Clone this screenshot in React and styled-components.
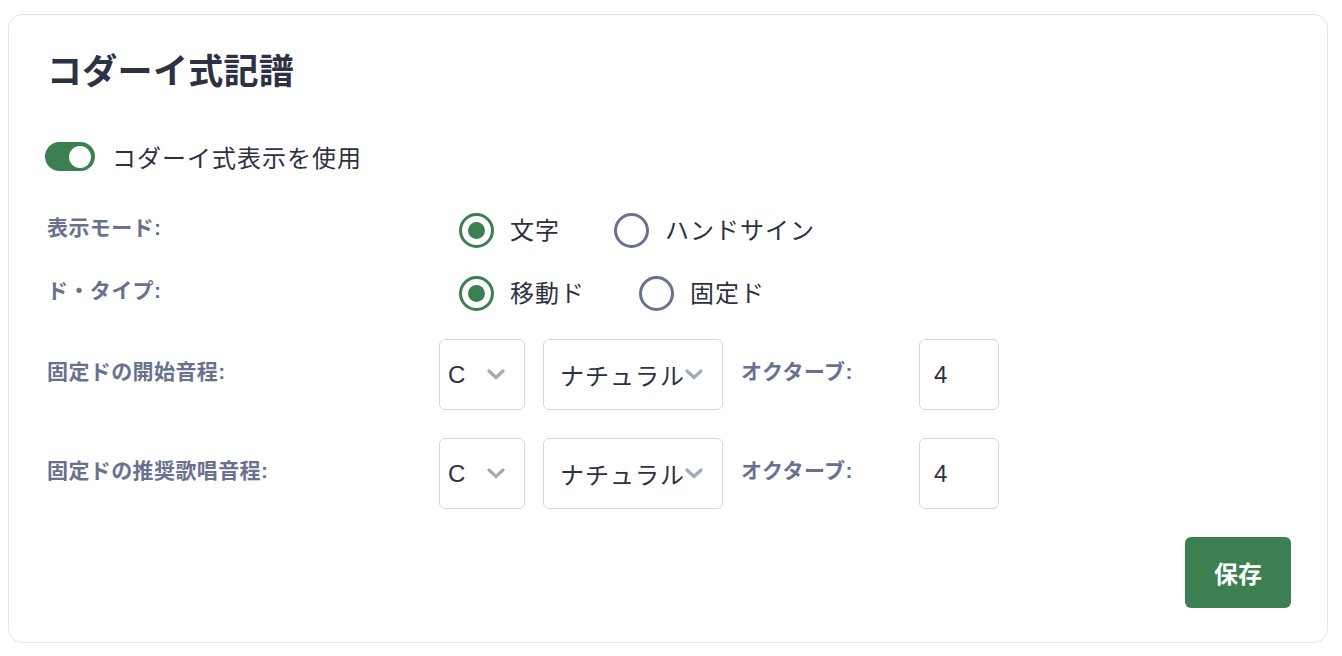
import React, { useState } from "react";
import styled, { createGlobalStyle } from "styled-components";

const Global = createGlobalStyle`
  html, body { margin: 0; padding: 0; background: #ffffff; }
  body {
    font-family: "Liberation Sans", "Noto Sans CJK JP", sans-serif;
    color: #2d3142;
  }
  * { box-sizing: border-box; }
`;

const Page = styled.div`
  padding: 14px 14px 12px 8px;
`;

const Card = styled.section`
  border: 1px solid #e3e4e8;
  border-radius: 14px;
  padding: 36px 36px 34px 38px;
  display: flex;
  flex-direction: column;
`;

const Title = styled.h2`
  margin: 0;
  font-size: 35px;
  line-height: 42px;
  font-weight: 700;
  color: #2d3142;
  letter-spacing: 0.3px;
`;

const ToggleRow = styled.label`
  margin-top: 49px;
  margin-left: -2px;
  display: flex;
  align-items: center;
  gap: 17px;
  height: 29px;
  font-size: 24px;
  letter-spacing: 1px;
  color: #2d3142;
  cursor: pointer;
`;

const Track = styled.span`
  position: relative;
  width: 50px;
  height: 29px;
  border-radius: 15px;
  background: ${(p) => (p.$on ? "#3c7f50" : "#c9ccd4")};
  flex-shrink: 0;
`;

const Knob = styled.span`
  position: absolute;
  top: 3.5px;
  left: ${(p) => (p.$on ? "24px" : "4px")};
  width: 22px;
  height: 22px;
  border-radius: 50%;
  background: #ffffff;
`;

const Rows = styled.div`
  margin-top: 42px;
  display: flex;
  flex-direction: column;
  gap: 28px;
`;

const Row = styled.div`
  display: flex;
  align-items: center;
  min-height: ${(p) => p.$h || 35}px;
`;

const FieldLabel = styled.span`
  width: ${(p) => p.$w || 392}px;
  flex-shrink: 0;
  font-size: 21px;
  font-weight: 700;
  letter-spacing: 0.4px;
  color: #68718f;
  padding-bottom: 6px;
  line-height: 28px;
`;

const RadioGroup = styled.div`
  display: flex;
  align-items: center;
  gap: 54px;
  padding-left: 20px;
`;

const RadioOption = styled.label`
  display: flex;
  align-items: center;
  gap: 16px;
  font-size: 24px;
  letter-spacing: 1px;
  line-height: 35px;
  color: #2d3142;
  cursor: pointer;
`;

const RadioCircle = styled.span`
  width: 35px;
  height: 35px;
  border-radius: 50%;
  border: 3px solid ${(p) => (p.$checked ? "#3c7f50" : "#68718f")};
  display: flex;
  align-items: center;
  justify-content: center;
  flex-shrink: 0;
  &::after {
    content: "";
    width: 17px;
    height: 17px;
    border-radius: 50%;
    background: ${(p) => (p.$checked ? "#3c7f50" : "transparent")};
  }
`;

const Controls = styled.div`
  display: flex;
  align-items: center;
  gap: 18px;
`;

const SelectBox = styled.div`
  width: ${(p) => p.$w}px;
  height: 71px;
  border: 1px solid #d3d6de;
  border-radius: 6px;
  display: flex;
  align-items: center;
  justify-content: space-between;
  padding: 0 19px 0 ${(p) => p.$pl}px;
  font-size: 24px;
  letter-spacing: 1px;
  color: #2d3142;
  white-space: nowrap;
  background: #fff;
`;

const NumberBox = styled.div`
  width: 80px;
  height: 71px;
  border: 1px solid #d3d6de;
  border-radius: 6px;
  display: flex;
  align-items: center;
  padding-left: 14px;
  font-size: 24px;
  color: #2d3142;
`;

const Footer = styled.div`
  margin-top: 28px;
  display: flex;
  justify-content: flex-end;
`;

const SaveButton = styled.button`
  width: 106px;
  height: 71px;
  border: none;
  border-radius: 6px;
  background: #3c7f50;
  color: #ffffff;
  font-family: "Noto Sans CJK JP", sans-serif;
  font-size: 24px;
  font-weight: 700;
  cursor: pointer;
`;

const Chevron = () => (
  <svg width="18" height="11" viewBox="0 0 18 11" fill="none">
    <polyline
      points="2,2 9,8.5 16,2"
      stroke="#a3aab8"
      strokeWidth="3.2"
      strokeLinecap="round"
      strokeLinejoin="round"
    />
  </svg>
);

const Radio = ({ checked, label, onClick }) => (
  <RadioOption onClick={onClick}>
    <RadioCircle $checked={checked} />
    {label}
  </RadioOption>
);

const PitchRow = ({ label }) => (
  <Row $h={71}>
    <FieldLabel>{label}</FieldLabel>
    <Controls>
      <SelectBox $w={86} $pl={8}>
        C<Chevron />
      </SelectBox>
      <SelectBox $w={180} $pl={16}>
        ナチュラル<Chevron />
      </SelectBox>
      <FieldLabel $w={160}>オクターブ:</FieldLabel>
      <NumberBox>4</NumberBox>
    </Controls>
  </Row>
);

export default function App() {
  const [on, setOn] = useState(true);
  const [mode, setMode] = useState("text");
  const [doType, setDoType] = useState("movable");
  return (
    <Page>
      <Global />
      <Card>
        <Title>コダーイ式記譜</Title>
        <ToggleRow onClick={() => setOn(!on)}>
          <Track $on={on}>
            <Knob $on={on} />
          </Track>
          コダーイ式表示を使用
        </ToggleRow>
        <Rows>
          <Row>
            <FieldLabel>表示モード:</FieldLabel>
            <RadioGroup>
              <Radio checked={mode === "text"} label="文字" onClick={() => setMode("text")} />
              <Radio checked={mode === "hand"} label="ハンドサイン" onClick={() => setMode("hand")} />
            </RadioGroup>
          </Row>
          <Row>
            <FieldLabel>ド・タイプ:</FieldLabel>
            <RadioGroup>
              <Radio checked={doType === "movable"} label="移動ド" onClick={() => setDoType("movable")} />
              <Radio checked={doType === "fixed"} label="固定ド" onClick={() => setDoType("fixed")} />
            </RadioGroup>
          </Row>
          <PitchRow label="固定ドの開始音程:" />
          <PitchRow label="固定ドの推奨歌唱音程:" />
        </Rows>
        <Footer>
          <SaveButton>保存</SaveButton>
        </Footer>
      </Card>
    </Page>
  );
}
